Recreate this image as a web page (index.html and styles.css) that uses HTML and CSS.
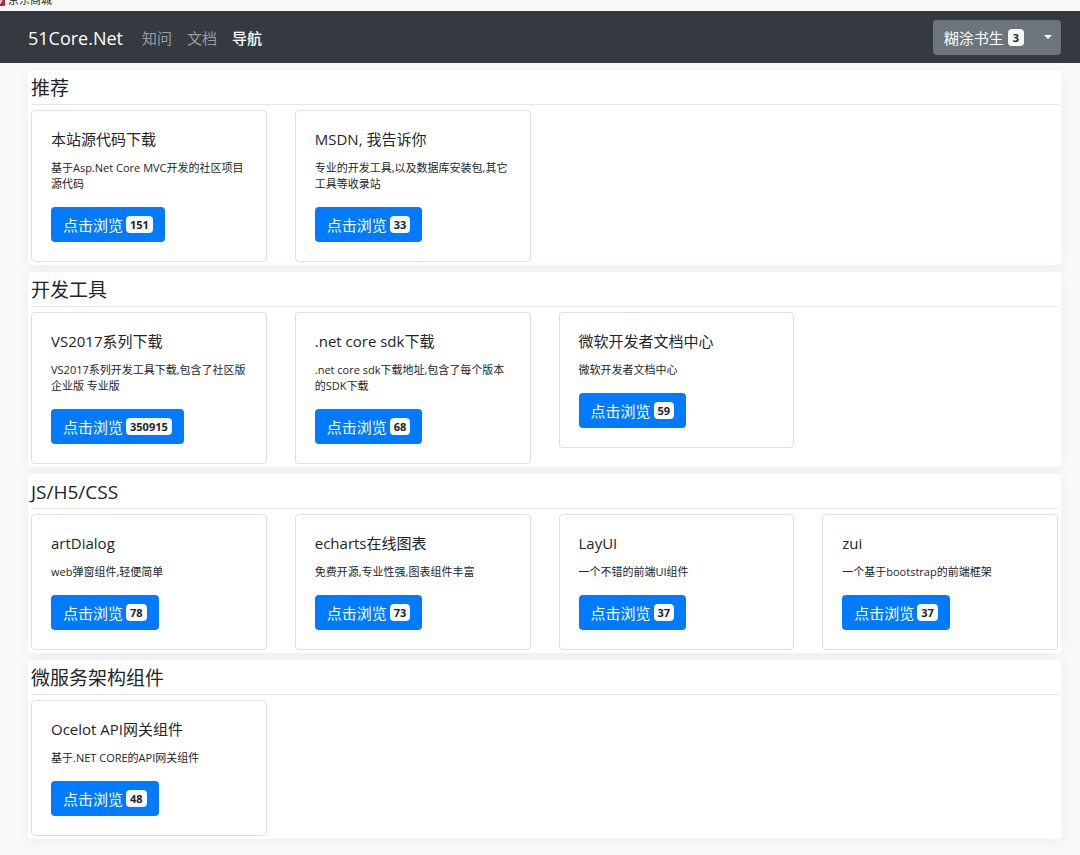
FILE: index.html
```html
<!DOCTYPE html>
<html lang="zh-CN">
<head>
<meta charset="utf-8">
<title>导航 - 51Core.Net</title>
<link rel="stylesheet" href="styles.css">
</head>
<body>
<div class="bookmarks">
  <a class="bookmark" href="#">
    <svg class="bookmark-icon" viewBox="0 0 12 12" aria-hidden="true"><rect width="12" height="12" rx="1" fill="#c8202f"/><path d="M3 4l4 5 4-7" fill="none" stroke="#fff" stroke-width="1.5"/></svg>
    <span>京东商城</span>
  </a>
</div>
<header class="navbar">
  <a class="brand" href="#">51Core.Net</a>
  <nav class="nav">
    <a class="nav-link" href="#">知问</a>
    <a class="nav-link" href="#">文档</a>
    <a class="nav-link active" href="#">导航</a>
  </nav>
  <div class="user-menu">
    <button class="user-button" type="button">糊涂书生 <span class="badge">3</span></button>
    <button class="user-toggle" type="button" aria-label="展开菜单"><span class="caret"></span></button>
  </div>
</header>
<main class="content">
  <section class="panel">
    <h2 class="panel-title">推荐</h2>
    <div class="cards">
      <article class="card">
        <h3 class="card-title">本站源代码下载</h3>
        <p class="card-text">基于Asp.Net Core MVC开发的社区项目源代码</p>
        <a class="btn" href="#">点击浏览 <span class="badge">151</span></a>
      </article>
      <article class="card">
        <h3 class="card-title">MSDN, 我告诉你</h3>
        <p class="card-text">专业的开发工具,以及数据库安装包,其它工具等收录站</p>
        <a class="btn" href="#">点击浏览 <span class="badge">33</span></a>
      </article>
    </div>
  </section>
  <section class="panel">
    <h2 class="panel-title">开发工具</h2>
    <div class="cards">
      <article class="card">
        <h3 class="card-title">VS2017系列下载</h3>
        <p class="card-text">VS2017系列开发工具下载,包含了社区版 企业版 专业版</p>
        <a class="btn" href="#">点击浏览 <span class="badge">350915</span></a>
      </article>
      <article class="card">
        <h3 class="card-title">.net core sdk下载</h3>
        <p class="card-text">.net core sdk下载地址,包含了每个版本的SDK下载</p>
        <a class="btn" href="#">点击浏览 <span class="badge">68</span></a>
      </article>
      <article class="card">
        <h3 class="card-title">微软开发者文档中心</h3>
        <p class="card-text">微软开发者文档中心</p>
        <a class="btn" href="#">点击浏览 <span class="badge">59</span></a>
      </article>
    </div>
  </section>
  <section class="panel">
    <h2 class="panel-title">JS/H5/CSS</h2>
    <div class="cards">
      <article class="card">
        <h3 class="card-title">artDialog</h3>
        <p class="card-text">web弹窗组件,轻便简单</p>
        <a class="btn" href="#">点击浏览 <span class="badge">78</span></a>
      </article>
      <article class="card">
        <h3 class="card-title">echarts在线图表</h3>
        <p class="card-text">免费开源,专业性强,图表组件丰富</p>
        <a class="btn" href="#">点击浏览 <span class="badge">73</span></a>
      </article>
      <article class="card">
        <h3 class="card-title">LayUI</h3>
        <p class="card-text">一个不错的前端UI组件</p>
        <a class="btn" href="#">点击浏览 <span class="badge">37</span></a>
      </article>
      <article class="card">
        <h3 class="card-title">zui</h3>
        <p class="card-text">一个基于bootstrap的前端框架</p>
        <a class="btn" href="#">点击浏览 <span class="badge">37</span></a>
      </article>
    </div>
  </section>
  <section class="panel">
    <h2 class="panel-title">微服务架构组件</h2>
    <div class="cards">
      <article class="card">
        <h3 class="card-title">Ocelot API网关组件</h3>
        <p class="card-text">基于.NET CORE的API网关组件</p>
        <a class="btn" href="#">点击浏览 <span class="badge">48</span></a>
      </article>
    </div>
  </section>
</main>
</body>
</html>
```
FILE: styles.css
```css
* { box-sizing: border-box; }

body {
  margin: 0;
  background: #f8f9fa;
  color: #212529;
  font-family: "Open Sans", "Noto Sans CJK SC", sans-serif;
  font-size: 15px;
}

h2, h3, p { margin: 0; font-weight: 400; }
a { color: inherit; text-decoration: none; }

/* Bookmark strip, scrolled partly out of view */
.bookmarks {
  display: flex;
  align-items: flex-end;
  height: 11px;
  padding-bottom: 4px;
  overflow: hidden;
  background: #fafafa;
}
.bookmark {
  display: flex;
  align-items: center;
  gap: 3px;
  margin-left: -7px;
  font-size: 11px;
  line-height: 14px;
}
.bookmark-icon { width: 12px; height: 12px; }

.navbar {
  display: flex;
  align-items: center;
  height: 52px;
  padding: 0 19px 0 28px;
  background: #343a40;
}
.brand { padding-top: 2px; color: #fff; font-size: 18px; line-height: 28px; }
.nav { display: flex; gap: 15px; margin-left: 19px; padding-top: 2px; }
.nav-link { color: #9a9da0; line-height: 24px; }
.nav-link.active { color: #fff; font-weight: 500; }

.user-menu {
  display: flex;
  height: 35px;
  margin-left: auto;
  border-radius: 4px;
  overflow: hidden;
}
.user-button, .user-toggle {
  display: flex;
  align-items: center;
  gap: 4px;
  border: 0;
  background: #6c757d;
  color: #fff;
  font: inherit;
}
.user-button { padding: 0 12px 0 11px; }
.user-button .badge { padding: 0 5px; }
.user-toggle { padding: 0 9px 0 8px; }
.caret {
  border-top: 4px solid #fff;
  border-left: 4px solid transparent;
  border-right: 4px solid transparent;
}

.content {
  display: grid;
  gap: 7px;
  padding: 7px 19px 16px 28px;
}
.panel {
  padding: 3px;
  border-radius: 4px;
  background: #fff;
  box-shadow: 0 2px 16px rgba(0, 0, 0, 0.05);
}
.panel-title {
  height: 32px;
  margin-bottom: 5px;
  border-bottom: 1px solid #e5e5e5;
  font-size: 19px;
  line-height: 30px;
}
.cards {
  display: grid;
  grid-template-columns: repeat(4, minmax(0, 1fr));
  align-items: start;
  gap: 28px;
}
.card {
  padding: 19px;
  border: 1px solid #dfdfdf;
  border-radius: 4px;
  background: #fff;
}
.card-title { font-size: 15px; line-height: 18px; }
.card-text {
  margin: 12px 0 15px;
  font-size: 11px;
  line-height: 16px;
}
.btn {
  display: flex;
  align-items: center;
  gap: 3px;
  width: fit-content;
  height: 35px;
  padding: 0 12px;
  border-radius: 4px;
  background: #007bff;
  color: #fff;
}
.badge {
  padding: 0 4px;
  border-radius: 4px;
  background: #f8f9fa;
  color: #212529;
  font-size: 11px;
  font-weight: 700;
  line-height: 17px;
}
```
